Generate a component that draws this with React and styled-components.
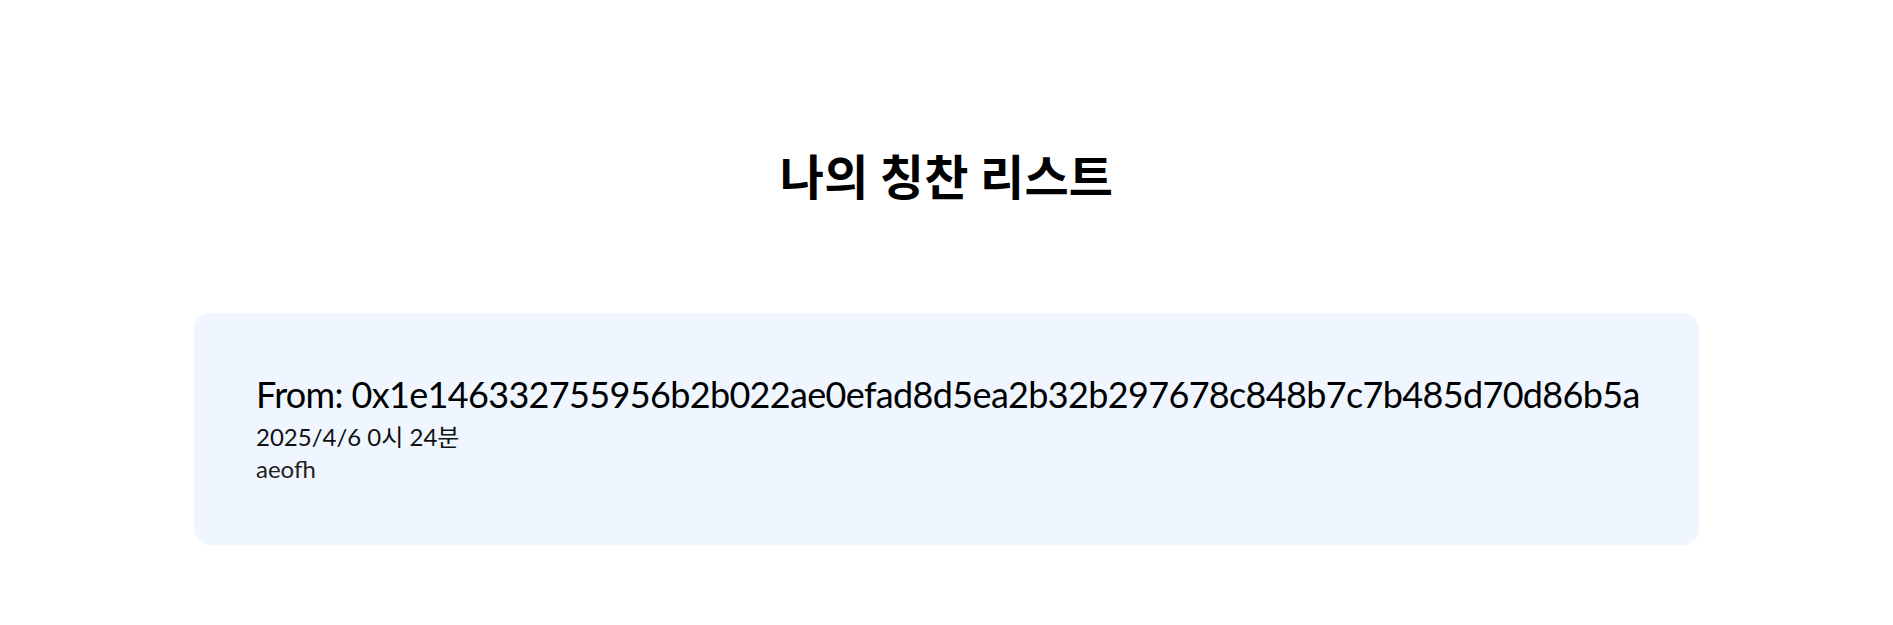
import React from "react";
import styled, { createGlobalStyle } from "styled-components";

const Global = createGlobalStyle`
  html, body { margin: 0; padding: 0; background: #ffffff; }
  body { font-family: "Lato", "Noto Sans CJK KR", sans-serif; color: #000; }
`;

const Page = styled.main`
  display: flex;
  flex-direction: column;
  align-items: center;
  padding-top: 144px;
`;

const Title = styled.h1`
  margin: 0;
  font-family: "Noto Sans CJK KR", sans-serif;
  font-size: 48px;
  font-weight: 700;
  line-height: 60px;
  letter-spacing: 0.3px;
  color: #000;
`;

const List = styled.section`
  width: 1505px;
  margin-top: 109px;
  display: flex;
  flex-direction: column;
  gap: 24px;
`;

const Card = styled.article`
  background: #eff6ff;
  border-radius: 16px;
  padding: 60px 62px 61px;
  display: flex;
  flex-direction: column;
`;

const From = styled.div`
  font-size: 36px;
  line-height: 43px;
  letter-spacing: -0.66px;
  white-space: nowrap;
  font-family: "Lato", "Noto Sans CJK KR", sans-serif;
  color: #000;
`;

const Meta = styled.div`
  font-size: 24px;
  line-height: 30px;
  font-family: "Lato", "Noto Sans CJK KR", sans-serif;
  color: ${(p) => p.$color || "#111"};
  margin-top: ${(p) => p.$gap || 0}px;
`;

const items = [
  {
    from: "0x1e146332755956b2b022ae0efad8d5ea2b32b297678c848b7c7b485d70d86b5a",
    date: "2025/4/6 0시 24분",
    message: "aeofh",
  },
];

export default function App() {
  return (
    <>
      <Global />
      <Page>
        <Title>나의 칭찬 리스트</Title>
        <List>
          {items.map((it) => (
            <Card key={it.from}>
              <From>From: {it.from}</From>
              <Meta $gap={6}>{it.date}</Meta>
              <Meta $gap={2} $color="#222">{it.message}</Meta>
            </Card>
          ))}
        </List>
      </Page>
    </>
  );
}
